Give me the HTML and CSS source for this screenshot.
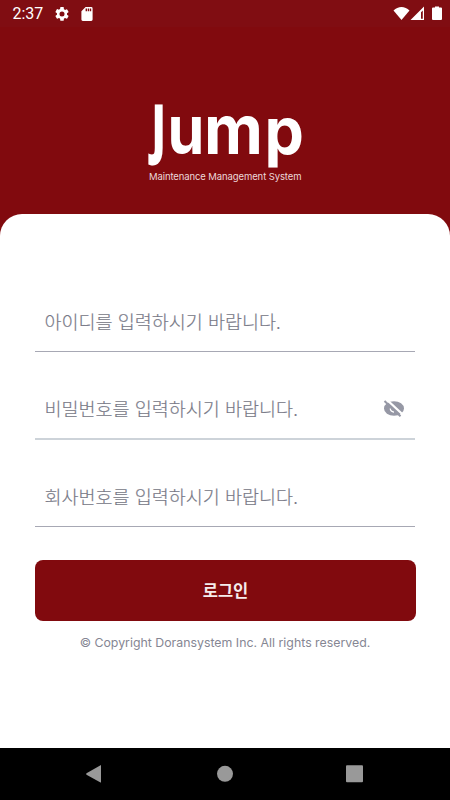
FILE: index.html
```html
<!DOCTYPE html>
<html lang="ko">
<head>
<meta charset="utf-8">
<meta name="viewport" content="width=device-width, initial-scale=1">
<title>Jump</title>
<link rel="stylesheet" href="styles.css">
</head>
<body>
<div class="screen">
  <header class="status">
    <span class="time">2:37</span>
    <svg class="gear" viewBox="2 2 20 20"><path d="M19.14 12.94c.04-.3.06-.61.06-.94s-.02-.64-.07-.94l2.03-1.58a.5.5 0 0 0 .12-.61l-1.92-3.32a.49.49 0 0 0-.59-.22l-2.39.96a7 7 0 0 0-1.62-.94l-.36-2.54A.48.48 0 0 0 13.92 2h-3.84a.48.48 0 0 0-.48.41l-.36 2.54c-.59.24-1.13.57-1.62.94l-2.39-.96a.48.48 0 0 0-.59.22L2.72 8.87a.48.48 0 0 0 .12.61l2.03 1.58a6 6 0 0 0 0 1.88l-2.03 1.58a.5.5 0 0 0-.12.61l1.92 3.32c.12.22.37.29.59.22l2.39-.96c.5.38 1.03.7 1.62.94l.36 2.54c.05.24.24.41.48.41h3.84c.24 0 .44-.17.48-.41l.36-2.54c.59-.24 1.13-.56 1.62-.94l2.39.96c.22.08.47 0 .59-.22l1.92-3.32a.5.5 0 0 0-.12-.61zM12 15.6a3.6 3.6 0 1 1 0-7.2 3.6 3.6 0 0 1 0 7.2z"/></svg>
    <svg class="card" viewBox="4 2 16 20"><path d="M18 2h-8L4 8v12a2 2 0 0 0 2 2h12a2 2 0 0 0 2-2V4a2 2 0 0 0-2-2zm-6 6h-2V4h2zm3 0h-2V4h2zm3 0h-2V4h2z"/></svg>
    <svg class="signals" viewBox="0 0 50 16"><path d="M.5 4.500C5-.2 12-.2 16.500 4.500L8.500 14z"/><path fill-rule="evenodd" d="M31 .5V14H17.500zM29.800 4.500L28 6.300V12.800h1.800z"/><path d="M40 1.500h2V.5h4v1h2q1 0 1 1V13q0 1-1 1h-8q-1 0-1-1V2.500q0-1 1-1z"/></svg>
  </header>
  <section class="brand">
    <svg class="logo" viewBox="0 0 170 90" role="img" aria-label="Jump Maintenance Management System">
      <g class="word">
        <text class="j" transform="translate(12.300 56) scale(.62 1)">J</text>
        <text transform="translate(27.500 59) scale(.87 1)">u</text>
        <text transform="translate(64 59) scale(.95 1)">m</text>
        <text transform="translate(124.500 58.500) scale(.92 .95)">p</text>
      </g>
      <text class="tagline" x="9" y="85" textLength="152.500">Maintenance Management System</text>
    </svg>
  </section>
  <main class="sheet">
    <label class="field"><span>아이디를 입력하시기 바랍니다.</span></label>
    <label class="field pale"><span>비밀번호를 입력하시기 바랍니다.</span>
      <svg class="eye" viewBox="0 0 22 18"><ellipse cx="11" cy="9.500" rx="10" ry="7.300"/><path class="ring" d="M7.300 9.500A3.500 3.500 0 0 0 11 13"/><path class="cut" d="M3.500 .4L20 15.700"/><path class="slash" d="M1.500 2L17.500 17.300"/></svg>
    </label>
    <label class="field last"><span>회사번호를 입력하시기 바랍니다.</span></label>
    <button class="login">로그인</button>
    <p class="copyright">© Copyright Doransystem Inc. All rights reserved.</p>
  </main>
  <nav class="nav">
    <svg viewBox="0 0 450 52"><path d="M86.500 25.300L101 17v17.200q0 .5-.5.3L86.500 26.700q-.8-.7 0-1.400z"/><circle cx="225" cy="25.800" r="8"/><rect x="346" y="17.300" width="17" height="17" rx="1"/></svg>
  </nav>
</div>
</body>
</html>
```

FILE: styles.css
```css
* { box-sizing: border-box; }
body { margin: 0; background: #810a0e; font-family: Inter, "Noto Sans CJK KR", sans-serif; }
svg { display: block; fill: #fff; }
.screen { width: 450px; height: 800px; display: flex; flex-direction: column; background: #810a0e; overflow: hidden; }
.status { height: 27px; flex: none; display: flex; align-items: center; padding: 0 0 0 12.5px; background: #800d12; }
.time { width: 42.5px; color: #fff; font: 16px/27px Roboto, sans-serif; }
.gear { width: 14px; height: 14px; }
.card { width: 12px; height: 14px; margin-left: 12px; }
.signals { width: 50px; height: 16px; margin-left: auto; margin-right: 7px; }
.brand { height: 187px; flex: none; display: flex; justify-content: center; padding-top: 68px; }
.logo { width: 170px; height: 90px; overflow: visible; }
.word { font: 700 68px Inter, sans-serif; }
.j { font: 700 63px "Open Sans", sans-serif; stroke: #fff; stroke-width: 3px; }
.tagline { font: 400 9.5px Inter, sans-serif; fill: #ecd8d9; }
.sheet { flex: 1; background: #fff; border-radius: 22px 22px 0 0; padding: 76px 35px 0; }
.field { display: flex; align-items: center; justify-content: space-between; height: 62px; margin-bottom: 26px; padding: 0 10px 0 9.5px; border-bottom: 1px solid #a7a8b4; color: #757684; font: 300 18.5px/60px "Noto Sans CJK KR", sans-serif; -webkit-text-stroke: 0.2px #858693; white-space: nowrap; }
.pale { border-bottom: 2px solid #cdd3d9; height: 62px; margin-bottom: 25px; }
.last { margin-bottom: 33px; }
.eye { width: 22px; height: 18px; fill: #9698a5; }
.ring { fill: none; stroke: #fff; stroke-width: 1.3; }
.cut { stroke: #fff; stroke-width: 2.2; }
.slash { stroke: #9698a5; stroke-width: 2; }
.login { display: block; width: 381px; height: 61px; border: 0; border-radius: 8px; background: #810a0e; color: #f5ecec; font: 700 16.5px/61px "Noto Sans CJK KR", sans-serif; padding: 0; }
.copyright { margin: 12px 0 0; text-align: center; color: #858693; font: 400 12.35px/19px Inter, sans-serif; white-space: nowrap; }
.nav { height: 52px; flex: none; background: #000; }
.nav svg { width: 450px; height: 52px; fill: #999; }
```
